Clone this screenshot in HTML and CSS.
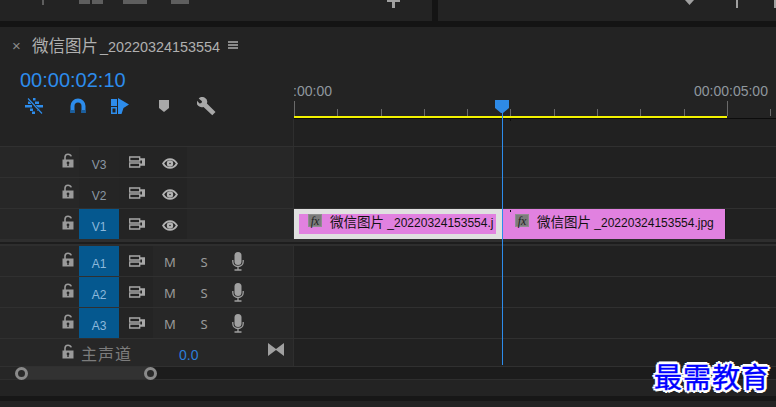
FILE: index.html
```html
<!DOCTYPE html>
<html lang="zh">
<head>
    <meta charset="UTF-8">
    <meta name="viewport" content="width=device-width, initial-scale=1.0">
    <title>微信图片 _20220324153554</title>
    <link rel="stylesheet" href="styles.css">
</head>
<body>
    <svg class="defs" width="0" height="0">
        <symbol id="lock" viewBox="0 0 12 15">
            <path d="M3 7V4.200C3 2.400 4.300 1.200 6 1.200S8.800 2 9.200 3.400" fill="none" stroke="#9a9a9a" stroke-width="1.600"/>
            <path fill-rule="evenodd" d="M.5 6.500h11v8H.5zM6 8.500a1.400 1.400 0 0 0-.7 2.600V13h1.400v-1.900A1.400 1.400 0 0 0 6 8.500z" fill="#9a9a9a"/>
        </symbol>
        <symbol id="sync" viewBox="0 0 16 12">
            <path d="M.7 1h10v4h-10zM.7 7h10v4h-10z" fill="none" stroke="#a8a8a8" stroke-width="1.300"/>
            <path d="M11 2.200h5v7.600h-5V7.600h2V4.400h-2z" fill="#a8a8a8"/>
        </symbol>
        <symbol id="eye" viewBox="0 0 16 11">
            <path fill-rule="evenodd" d="M0 5.500C2 1.800 5 .2 8 .2s6 1.600 8 5.300c-2 3.700-5 5.300-8 5.300S2 9.200 0 5.500zm2.200 0C3.700 7.800 5.800 9.100 8 9.100s4.300-1.300 5.800-3.600C12.300 3.200 10.200 1.900 8 1.900S3.700 3.200 2.200 5.500z" fill="#b4b4b4"/>
            <path fill-rule="evenodd" d="M8 2.300a3.200 3.200 0 1 0 0 6.400 3.200 3.200 0 0 0 0-6.400zm0 2.400a.8.800 0 1 1 0 1.600.8.800 0 0 1 0-1.600z" fill="#b4b4b4"/>
        </symbol>
        <symbol id="mic" viewBox="0 0 12 19">
            <rect x="2.500" y="0" width="7" height="13" rx="3.500" fill="#a0a0a0"/>
            <path d="M.8 8v1.500C.8 12.500 3 14.500 6 14.500s5.200-2 5.200-5V8M6 14.500V18M2.500 18h7" fill="none" stroke="#a0a0a0" stroke-width="1.300"/>
        </symbol>
    </svg>

    <div class="top-strip">
        <div class="top-pane">
            <i class="stub stub-a"></i><i class="stub stub-b"></i><i class="stub stub-c"></i><i class="stub stub-d"></i><i class="stub stub-e"></i>
        </div>
        <div class="top-pane top-pane-right">
            <i class="stub stub-f"></i><i class="stub stub-g"></i><i class="stub stub-g"></i>
        </div>
    </div>

    <div class="panel">
        <!-- 标题和时间码 -->
        <div class="panel-top">
            <div class="head-col">
                <div class="title-row">
                    <span class="close">×</span>
                    <span class="title"><span class="cn">微信图片</span> _20220324153554</span>
                    <span class="menu"></span>
                </div>
                <div class="timecode">00:00:02:10</div>
                <div class="tools">
                    <svg class="tool" width="18" height="16" viewBox="0 0 18 16"><g fill="#2d8ceb"><rect x="8" y="0" width="2.500" height="2.500"/><rect x="3" y="3.500" width="3.500" height="2.500"/><rect x="10" y="3.500" width="4" height="2.500"/><rect x="0" y="7" width="7" height="2.500"/><rect x="11" y="7" width="7" height="2.500"/><rect x="5" y="10.500" width="3" height="2.500"/><rect x="12" y="10.500" width="2.500" height="2.500"/><rect x="7" y="13.500" width="3" height="2.500"/></g><path d="M3 .5L17 15.500" stroke="#232323" stroke-width="2.400"/><path d="M3 .5L17 15.500" stroke="#2d8ceb" stroke-width="1.200"/></svg>
                    <svg class="tool tool-magnet" width="16" height="16" viewBox="0 0 16 16"><path d="M2.500 15V8a5.500 5.500 0 0 1 11 0v7" fill="none" stroke="#2d8ceb" stroke-width="4"/><path d="M.5 12h4v3h-4zM11.500 12h4v3h-4z" fill="#1a5f9f"/></svg>
                    <svg class="tool tool-link" width="18" height="16" viewBox="0 0 18 16"><path d="M0 1h6v7H0zM0 9h6v7H0z" fill="#2d8ceb"/><path d="M1.500 10.500h3v4h-3z" fill="#232323"/><path d="M7 0L18 6.500 12.500 10l-2 6H7z" fill="#2d8ceb"/></svg>
                    <svg class="tool tool-marker" width="10" height="12" viewBox="0 0 10 12"><path d="M0 0h10v8l-5 4-5-4z" fill="#a8a8a8"/></svg>
                    <svg class="tool tool-wrench" width="19" height="19" viewBox="0 0 19 19"><path d="M7.500.5a5 5 0 0 0-5.800 1L5 4.200 4.500 6 2.600 6.500-.2 3.500a5.200 5.200 0 0 0 6.700 6.400l8.800 8.300 3.200-3.200-8.600-8.500A5 5 0 0 0 7.500.5z" fill="#a8a8a8"/></svg>
                </div>
            </div>
            <div class="ruler">
                <div class="ruler-labels"><span>00:00:00:00</span><span>00:00:05:00</span></div>
                <div class="ticks">
                    <i class="tick long"></i><i class="tick"></i><i class="tick"></i><i class="tick"></i><i class="tick"></i>
                    <i class="tick"></i><i class="tick"></i><i class="tick"></i><i class="tick"></i><i class="tick"></i>
                    <i class="tick long"></i><i class="tick"></i>
                </div>
                <div class="work-area"><div class="work-bar"></div></div>
            </div>
        </div>

        <!-- 轨道 -->
        <div class="track track-gap"><div class="track-head"></div><div class="lane"></div></div>

        <div class="track">
            <div class="track-head">
                <svg class="lock" width="12" height="15"><use href="#lock"/></svg>
                <span class="tag">V3</span>
                <span class="cell shade sync"><svg width="16" height="12"><use href="#sync"/></svg></span>
                <span class="cell shade eye"><svg width="16" height="11"><use href="#eye"/></svg></span>
            </div>
            <div class="lane"></div>
        </div>
        <div class="track">
            <div class="track-head">
                <svg class="lock" width="12" height="15"><use href="#lock"/></svg>
                <span class="tag">V2</span>
                <span class="cell shade sync"><svg width="16" height="12"><use href="#sync"/></svg></span>
                <span class="cell shade eye"><svg width="16" height="11"><use href="#eye"/></svg></span>
            </div>
            <div class="lane"></div>
        </div>
        <div class="track track-last">
            <div class="track-head">
                <svg class="lock" width="12" height="15"><use href="#lock"/></svg>
                <span class="tag tag-on">V1</span>
                <span class="cell shade sync"><svg width="16" height="12"><use href="#sync"/></svg></span>
                <span class="cell shade eye"><svg width="16" height="11"><use href="#eye"/></svg></span>
            </div>
            <div class="lane clips">
                <div class="clip clip-selected">
                    <div class="clip-fill">
                        <span class="fx">fx</span>
                        <span class="clip-name"><span class="cn">微信图片</span> _20220324153554.j</span>
                    </div>
                </div>
                <div class="clip clip-plain">
                    <span class="fx">fx</span>
                    <span class="clip-name"><span class="cn">微信图片</span> _20220324153554.jpg</span>
                </div>
            </div>
        </div>

        <div class="divider"></div>

        <div class="track">
            <div class="track-head">
                <svg class="lock" width="12" height="15"><use href="#lock"/></svg>
                <span class="tag tag-on">A1</span>
                <span class="cell shade sync"><svg width="16" height="12"><use href="#sync"/></svg></span>
                <span class="cell letter">M</span>
                <span class="cell letter">S</span>
                <span class="cell"><svg width="12" height="19"><use href="#mic"/></svg></span>
            </div>
            <div class="lane"></div>
        </div>
        <div class="track">
            <div class="track-head">
                <svg class="lock" width="12" height="15"><use href="#lock"/></svg>
                <span class="tag tag-on">A2</span>
                <span class="cell shade sync"><svg width="16" height="12"><use href="#sync"/></svg></span>
                <span class="cell letter">M</span>
                <span class="cell letter">S</span>
                <span class="cell"><svg width="12" height="19"><use href="#mic"/></svg></span>
            </div>
            <div class="lane"></div>
        </div>
        <div class="track">
            <div class="track-head">
                <svg class="lock" width="12" height="15"><use href="#lock"/></svg>
                <span class="tag tag-on">A3</span>
                <span class="cell shade sync"><svg width="16" height="12"><use href="#sync"/></svg></span>
                <span class="cell letter">M</span>
                <span class="cell letter">S</span>
                <span class="cell"><svg width="12" height="19"><use href="#mic"/></svg></span>
            </div>
            <div class="lane"></div>
        </div>
        <div class="track track-master">
            <div class="track-head">
                <svg class="lock" width="12" height="15"><use href="#lock"/></svg>
                <span class="master-name">主声道</span>
                <span class="master-value">0.0</span>
                <svg class="bowtie" width="16" height="13" viewBox="0 0 16 13"><path d="M0 0l8 6v1l-8 6zM16 0L8 6v1l8 6z" fill="#a0a0a0"/></svg>
            </div>
            <div class="lane"></div>
        </div>

        <!-- 缩放条 -->
        <div class="zoom-bar">
            <div class="zoom-thumb"><i class="knob knob-left"></i><i class="knob knob-right"></i></div>
            <div class="zoom-rest"></div>
        </div>
        <div class="panel-foot"></div>
    </div>
    <div class="bottom-gap"></div>
    <div class="bottom-pane"></div>

    <!-- 播放头 -->
    <div class="playhead">
        <svg width="14" height="13" viewBox="0 0 14 13"><path d="M0 0h14v8l-6 5H6L0 8z" fill="#2e8ae6"/></svg>
        <div class="playhead-line"></div>
    </div>
    <i class="cue cue-ruler"></i>
    <i class="cue cue-clip"></i>

    <div class="watermark">最需教育</div>
</body>
</html>
```

FILE: styles.css
```css
* {
    box-sizing: border-box;
}
html, body {
    height: 100%;
}
body {
    margin: 0;
    position: relative;
    overflow: hidden;
    background-color: #232323;
    font-family: "Liberation Sans", "Noto Sans CJK SC", sans-serif;
}
.defs {
    position: absolute;
}
.cn {
    font-family: "Noto Sans CJK SC", sans-serif;
}

/* top panels, only their bottom edge is visible */
.top-strip {
    display: flex;
    height: 27px;
    padding-bottom: 6px;
    gap: 6px;
    background-color: #141414;
}
.top-pane {
    position: relative;
    width: 432px;
    background-color: #232323;
}
.top-pane-right {
    flex: 1;
}
.stub {
    position: absolute;
    top: 0;
    background-color: #5e5e5e;
}
.stub-a { left: 42px; width: 2px; height: 5px; }
.stub-b { left: 79px; width: 24px; height: 4px; background: linear-gradient(90deg, #5e5e5e 0 11px, transparent 11px 13px, #5e5e5e 13px); }
.stub-c { left: 123px; width: 24px; height: 4px; }
.stub-d { left: 171px; width: 18px; height: 4px; }
.stub-e { left: 392px; width: 3px; height: 8px; background-color: #a0a0a0; }
.stub-e::before {
    content: "";
    position: absolute;
    left: -5px;
    width: 13px;
    height: 2px;
    background-color: #a0a0a0;
}
.stub-f { left: 247px; width: 9px; height: 5px; background-color: #a0a0a0; clip-path: polygon(0 0, 100% 0, 50% 100%); }
.stub-g { left: 298px; width: 2px; height: 8px; background-color: #a0a0a0; }
.stub-g + .stub-g { left: 336px; }

.panel-top {
    display: flex;
    height: 92px;
}
.head-col {
    width: 294px;
    padding-left: 15px;
}
.title-row {
    display: flex;
    align-items: center;
    height: 36px;
    color: #b0b0b0;
}
.close {
    width: 17px;
    margin-left: -7px;
    text-align: center;
    font-size: 15px;
    color: #8a8a8a;
}
.title {
    margin-left: 7px;
    font-size: 14.4px;
    word-spacing: -2px;
    white-space: nowrap;
}
.title .cn {
    font-size: 16.5px;
}
.menu {
    width: 10px;
    height: 8px;
    margin-left: 8px;
    border-top: 2px solid #8a8a8a;
    border-bottom: 2px solid #8a8a8a;
    background: linear-gradient(#8a8a8a, #8a8a8a) 0 1px / 100% 2px no-repeat;
}
.timecode {
    margin: 5px 0 0 5px;
    height: 24px;
    line-height: 24px;
    font-size: 20px;
    color: #2d8ceb;
}
.tools {
    display: flex;
    align-items: center;
    height: 24px;
    margin-top: 2px;
    padding-left: 10px;
}
.tool-magnet { margin-left: 27px; }
.tool-link { margin-left: 25px; }
.tool-marker { margin-left: 30px; }
.tool-wrench { margin-left: 28px; }

.ruler {
    position: relative;
    flex: 1;
    overflow: hidden;
}
.ruler-labels {
    display: flex;
    gap: 362px;
    margin: 56px 0 0 -36px;
    height: 16px;
    line-height: 16px;
    font-size: 14px;
    color: #8f979e;
}
.ticks {
    display: flex;
    height: 18px;
    margin-top: -1px;
    align-items: flex-end;
}
.tick {
    flex: none;
    width: 43.3px;
    height: 7px;
    border-left: 1px solid #6a6a6a;
}
.tick.long {
    height: 15px;
}
.work-area {
    height: 3px;
    border-bottom: 1px solid #0c0c0c;
}
.work-bar {
    width: 433px;
    height: 2px;
    background-color: #f2f200;
}

.track {
    display: flex;
    height: 31px;
    border-bottom: 1px solid #303030;
}
.track-gap {
    height: 28px;
}
.track-gap .track-head {
    background-color: #232323;
}
.track-last {
    height: 30px;
    border-bottom: none;
}
.track-master {
    height: 28px;
}
.track-head {
    display: flex;
    align-items: center;
    width: 294px;
    padding-left: 62px;
    background-color: #272727;
    border-right: 1px solid #2e2e2e;
}
.lane {
    flex: 1;
    background-color: #212121;
}
.lock {
    flex: none;
    margin: -3px 5px 0 0;
}
.tag {
    flex: none;
    align-self: stretch;
    width: 40px;
    padding-top: 5px;
    line-height: 26px;
    text-align: center;
    font-size: 12px;
    color: #8b97a3;
    background-color: #252525;
}
.tag-on {
    color: #8db9dc;
    background-color: #05588f;
}
.cell {
    display: flex;
    flex: none;
    align-self: stretch;
    align-items: center;
    justify-content: center;
    width: 34px;
}
.shade {
    background-color: #242424;
}
.sync {
    padding: 0 0 1px 2px;
}
.eye {
    padding-top: 2px;
}
.letter {
    padding-top: 2px;
    font-family: "Noto Sans", sans-serif;
    font-size: 13px;
    color: #9a9a9a;
}
.master-name {
    margin-left: 2px;
    width: 98px;
    font-family: "Noto Sans CJK SC", sans-serif;
    font-size: 16px;
    letter-spacing: 1px;
    color: #7c7c7c;
}
.master-value {
    width: 89px;
    padding-top: 4px;
    font-size: 14px;
    color: #2d7fd8;
}
.bowtie {
    margin-top: -6px;
}

/* clips */
.clips {
    display: flex;
}
.clip {
    height: 30px;
    overflow: hidden;
}
.clip-selected {
    width: 208px;
    padding: 5px 6px 5px 5px;
    background-color: #e0e0e0;
}
.clip-fill {
    display: flex;
    align-items: flex-start;
    height: 20px;
    padding-left: 9px;
    background-color: #e181e0;
}
.clip-plain {
    display: flex;
    align-items: flex-start;
    width: 224px;
    padding: 5px 0 0 13px;
    background-color: #e181e0;
    border-right: 1px solid #1a1a1a;
}
.fx {
    flex: none;
    width: 14px;
    height: 13px;
    line-height: 12px;
    text-align: center;
    font-family: "Liberation Serif", serif;
    font-style: italic;
    font-size: 12px;
    color: #222;
    background-color: #7c7c7c;
    border: 1px solid #8e8e8e;
}
.clip-name {
    margin-left: 8px;
    line-height: 14px;
    white-space: nowrap;
    font-size: 12px;
    color: #111;
}
.clip-name .cn {
    font-size: 13.5px;
}

.divider {
    height: 7px;
    background: linear-gradient(#2e2e2e 0 3px, #1d1d1d 3px 5px, #2e2e2e 5px);
}

/* zoom scroll bar */
.zoom-bar {
    display: flex;
    height: 12px;
    background-color: #262626;
}
.zoom-thumb {
    position: relative;
    width: 129px;
    margin-left: 22px;
    background-color: #323232;
}
.zoom-rest {
    flex: 1;
    background-color: #1c1c1c;
}
.knob {
    position: absolute;
    top: 0;
    width: 13px;
    height: 13px;
    border: 3px solid #8a8a8a;
    border-radius: 50%;
    background-color: #2a2a2a;
}
.knob-left { left: -7px; }
.knob-right { right: -6px; }
.panel-foot {
    height: 17px;
    border-top: 1px solid #2e2e2e;
}
.bottom-gap {
    height: 5px;
    background-color: #171717;
}
.bottom-pane {
    height: 7px;
}

/* over the tracks */
.playhead {
    position: absolute;
    left: 495px;
    top: 100px;
    width: 14px;
}
.playhead svg {
    display: block;
}
.playhead-line {
    width: 1px;
    height: 253px;
    margin: -1px 0 0 7px;
    background-color: #2d8ceb;
}
.cue {
    position: absolute;
    left: 510px;
    width: 1px;
    height: 2px;
    background-color: #0c0c0c;
}
.cue-ruler { top: 119px; }
.cue-clip { top: 210px; }
.watermark {
    position: absolute;
    left: 654px;
    top: 359px;
    font-family: "Noto Sans CJK SC", sans-serif;
    font-weight: 400;
    font-size: 28px;
    line-height: 34px;
    letter-spacing: 1px;
    white-space: nowrap;
    color: #0000ff;
    -webkit-text-stroke: 0.4px #0000ff;
    text-shadow: 2px 0 #fff, -2px 0 #fff, 0 2px #fff, 0 -2px #fff, 2px 2px #fff, -2px 2px #fff, 2px -2px #fff, -2px -2px #fff, 3px 0 #fff, -3px 0 #fff, 0 3px #fff, 0 -3px #fff;
}
```
